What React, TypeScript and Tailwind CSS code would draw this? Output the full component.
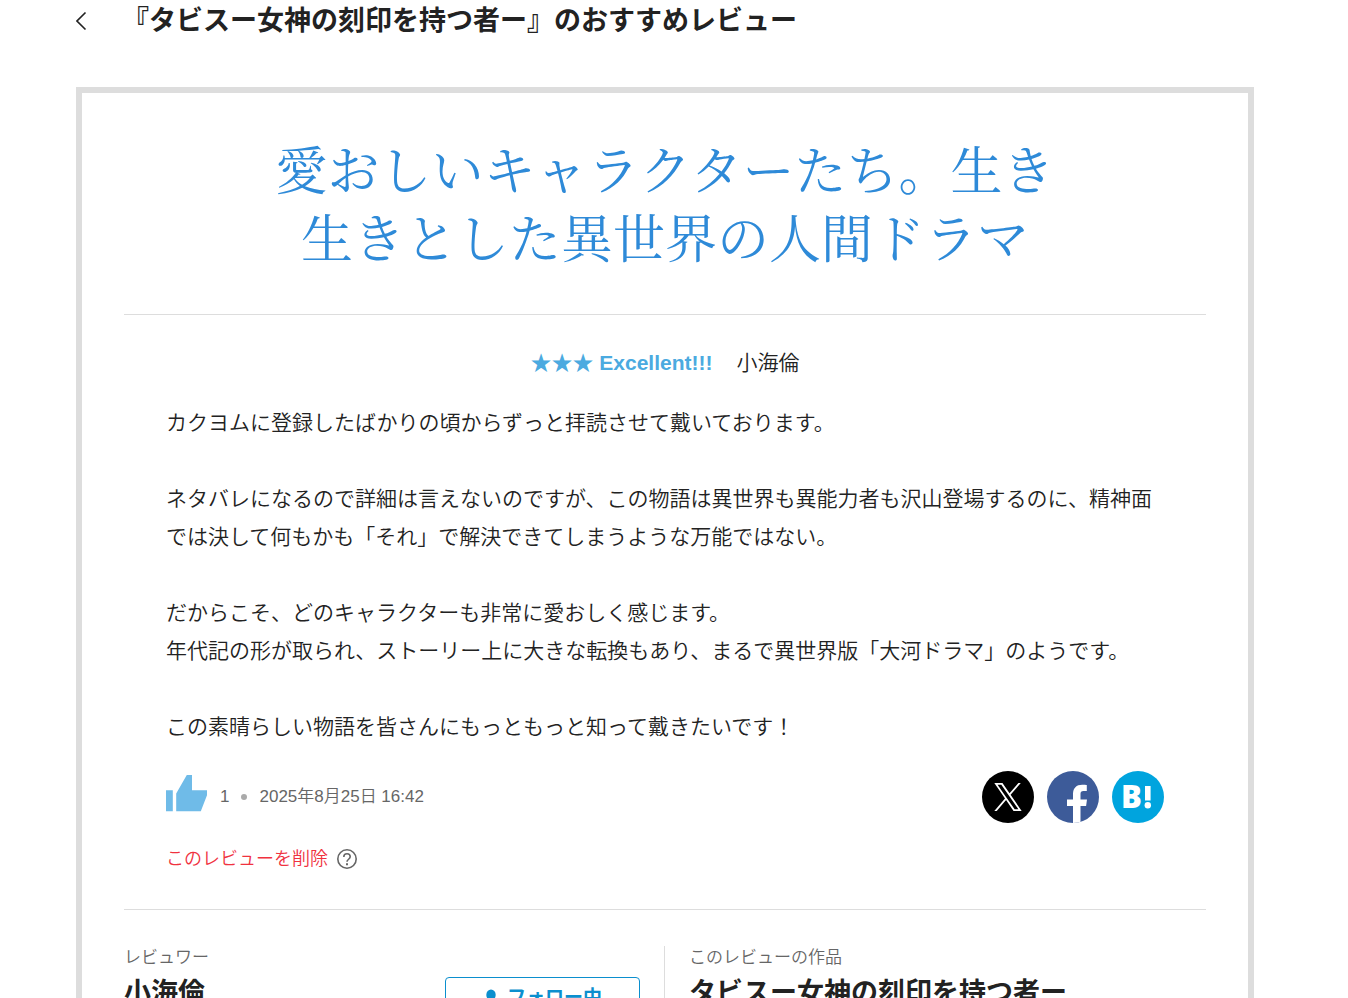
import type { ReactNode } from 'react';

const paragraphs: string[][] = [
  ['カクヨムに登録したばかりの頃からずっと拝読させて戴いております。'],
  [
    'ネタバレになるので詳細は言えないのですが、この物語は異世界も異能力者も沢山登場するのに、精神面では決して何もかも「それ」で解決できてしまうような万能ではない。',
  ],
  [
    'だからこそ、どのキャラクターも非常に愛おしく感じます。',
    '年代記の形が取られ、ストーリー上に大きな転換もあり、まるで異世界版「大河ドラマ」のようです。',
  ],
  ['この素晴らしい物語を皆さんにもっともっと知って戴きたいです！'],
];

function BackIcon() {
  return (
    <svg viewBox="0 0 12 20" className="h-5 w-3" fill="none" stroke="currentColor" strokeWidth="1.6" aria-hidden="true">
      <path d="M9.500 1.5 1 10 9.500 18.5" />
    </svg>
  );
}

function ThumbIcon() {
  return (
    <svg viewBox="0 0 42 38" className="h-[38px] w-[42px]" fill="currentColor" aria-hidden="true">
      <path d="M0 16.3h6.800v20.9H0zM10.200 37.2V19.5L20.8 1H26v15.2h15v5L34.8 37.2z" />
    </svg>
  );
}

function HelpIcon() {
  return (
    <svg viewBox="0 0 24 24" className="size-6" fill="none" stroke="currentColor" strokeWidth="1.6" aria-hidden="true">
      <circle cx="12" cy="12" r="9.200" />
      <path d="M8.800 10c0-1.900 1.400-3.200 3.200-3.200s3.200 1.300 3.200 3c0 2.300-3.200 2.600-3.200 5" />
      <path d="M12 16.200v2" strokeWidth="2" />
    </svg>
  );
}

function XLogo() {
  return (
    <svg viewBox="0 0 1200 1227" className="h-7 w-7" fill="#fff" aria-hidden="true">
      <path d="M714.163 519.284L1160.89 0H1055.03L667.137 450.887L357.328 0H0L468.492 681.821L0 1226.37H105.866L515.491 750.218L842.672 1226.37H1200L714.137 519.284H714.163ZM569.165 687.828L521.697 619.934L144.011 79.6944H306.615L611.412 515.685L658.88 583.579L1055.08 1150.3H892.476L569.165 687.854V687.828Z" />
    </svg>
  );
}

function FacebookLogo() {
  return (
    <svg viewBox="0 0 52 52" className="size-full" fill="#fff" aria-hidden="true">
      <path d="M26 52V35h-6v-6.500h6v-5.500c0-6 3.400-9.300 9.200-9.300 2 0 3.900.1 4.600.3v6h-3.200c-2.500 0-3.100 1.200-3.100 3v5.500h6.500l-.9 6.500h-5.600v17z" />
    </svg>
  );
}

function HatenaLogo() {
  return (
    <svg viewBox="0 0 52 52" className="size-full" fill="#fff" aria-hidden="true">
      <text x="9" y="37" fontSize="31" fontWeight="800" fontFamily="'Open Sans', 'Noto Sans', sans-serif">
        B
      </text>
      <path d="M33 15h5.600v14.400H33z" />
      <circle cx="35.800" cy="34.200" r="3.200" />
    </svg>
  );
}

function PersonIcon() {
  return (
    <svg viewBox="0 0 20 20" className="size-5" fill="currentColor" aria-hidden="true">
      <ellipse cx="10" cy="7" rx="4.700" ry="5.500" />
      <path d="M1 19c0-4 4-5.500 7.500-6.500h3C15 13.500 19 15 19 19z" />
    </svg>
  );
}

function ShareLink({ label, color, children }: { label: string; color: string; children: ReactNode }) {
  return (
    <a
      href="#share"
      aria-label={label}
      className={`flex size-[52px] items-center justify-center overflow-hidden rounded-full ${color}`}
    >
      {children}
    </a>
  );
}

export default function App() {
  return (
    <div
      lang="ja"
      className="min-h-screen bg-white pr-[94px] pl-[76px] font-['Liberation_Sans','Noto_Sans_CJK_JP',sans-serif] font-[350] text-[#222]"
    >
      <header className="flex h-[42px] items-center">
        <a href="#back" aria-label="戻る" className="w-[46px] shrink-0">
          <BackIcon />
        </a>
        <h1 className="text-[27px] leading-10 font-bold">『タビスー女神の刻印を持つ者ー』のおすすめレビュー</h1>
      </header>

      <main className="mt-[45px] border-[6px] border-[#ddd] px-[42px] pb-10">
        <article>
          <h2 className="mx-auto max-w-[800px] pt-[41px] pb-11 text-center font-['Noto_Serif_CJK_JP','Noto_Serif_JP',serif] text-[52px] leading-[68px] font-normal text-[#2e8ad8]">
            <a href="#review">愛おしいキャラクターたち。生き生きとした異世界の人間ドラマ</a>
          </h2>

          <div className="border-y border-[#ddd] px-[42px] pt-[29px] pb-[38px]">
            <p className="flex justify-center gap-6 text-[21px] leading-[38px]">
              <span className="font-bold text-[#4baae0]">★★★ Excellent!!!</span>
              <a href="#reviewer">小海倫</a>
            </p>
            <div className="mt-[22px] flex flex-col gap-[38px] text-[21px] leading-[38px]">
              {paragraphs.map((lines) => (
                <p key={lines[0]}>
                  {lines.map((line) => (
                    <span key={line} className="block">
                      {line}
                    </span>
                  ))}
                </p>
              ))}
            </div>

            <div className="mt-[25px] flex items-center justify-between">
              <div className="flex items-center text-[17px] text-[#666]">
                <button type="button" aria-label="いいね" className="mb-2 text-[#6fbbe8]">
                  <ThumbIcon />
                </button>
                <span className="ml-3">1</span>
                <span className="mx-3 size-[6px] rounded-full bg-[#aaa]" />
                <time dateTime="2025-08-25T16:42">2025年8月25日 16:42</time>
              </div>
              <div className="flex gap-[13px]">
                <ShareLink label="X" color="bg-black">
                  <XLogo />
                </ShareLink>
                <ShareLink label="Facebook" color="bg-[#3d5b99]">
                  <FacebookLogo />
                </ShareLink>
                <ShareLink label="はてなブックマーク" color="bg-[#00a4de]">
                  <HatenaLogo />
                </ShareLink>
              </div>
            </div>

            <div className="mt-6 flex items-center gap-[7px]">
              <button type="button" className="text-[18px] leading-6 text-[#f0323f]">
                このレビューを削除
              </button>
              <a href="#help" aria-label="ヘルプ" className="text-[#666]">
                <HelpIcon />
              </a>
            </div>
          </div>
        </article>

        <div className="mt-9 grid grid-cols-2">
          <section className="pr-[25px]">
            <h3 className="text-[17px] leading-6 text-[#666]">レビュワー</h3>
            <div className="mt-[7px] flex items-start justify-between">
              <a href="#reviewer" className="-mt-[2px] text-[27px] leading-9 font-bold">
                小海倫
              </a>
              <button
                type="button"
                className="flex h-[42px] w-[195px] items-center justify-center gap-[6px] rounded border border-[#0b8fce] pr-[2px] text-[19px] font-bold text-[#0b8fce]"
              >
                <PersonIcon />
                フォロー中
              </button>
            </div>
          </section>
          <section className="-ml-px border-l border-[#ddd] pl-6">
            <h3 className="text-[17px] leading-6 text-[#666]">このレビューの作品</h3>
            <a href="#work" className="mt-[5px] block text-[27px] leading-9 font-bold">
              タビスー女神の刻印を持つ者ー
            </a>
          </section>
        </div>
      </main>
    </div>
  );
}
